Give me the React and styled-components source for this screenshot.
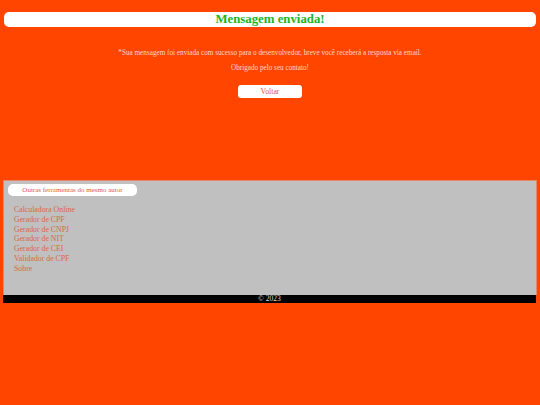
import styled, { createGlobalStyle } from "styled-components";

const GlobalStyle = createGlobalStyle`
  html, body {
    margin: 0;
    padding: 0;
    background: #ff4500;
  }
  body {
    font-family: "Liberation Serif", "Times New Roman", serif;
    min-height: 405px;
  }
`;

const Page = styled.div`
  padding: 12px 3px 0 3px;
  display: flex;
  flex-direction: column;
`;

const TitleBar = styled.h1`
  margin: 0 1px;
  background: #fff;
  border-radius: 5px;
  height: 15px;
  line-height: 15px;
  text-align: center;
  font-size: 12.8px;
  font-weight: bold;
  color: #1cb41c;
`;

const Message = styled.div`
  display: flex;
  flex-direction: column;
  align-items: center;
  padding-top: 22px;
  height: 131px;
  color: #ffd6c8;
  font-size: 7.2px;
`;

const Line = styled.p`
  margin: 0 0 6px 0;
  line-height: 9px;
`;

const BackButton = styled.button`
  margin-top: 5.5px;
  width: 64px;
  height: 13px;
  border: none;
  border-radius: 3px;
  background: #fff;
  color: #e65a36;
  font-family: inherit;
  font-size: 7.8px;
  padding: 0;
`;

const Panel = styled.div`
  background: #c0c0c0;
  border: 1px solid #e8876a;
  border-bottom: none;
  height: 111px;
  padding: 3px 0 0 4px;
  display: flex;
  flex-direction: column;
  align-items: flex-start;
`;

const PanelLabel = styled.div`
  background: #fff;
  border-radius: 5px;
  width: 129px;
  height: 12px;
  line-height: 12px;
  font-size: 7px;
  color: #e4583a;
  text-align: center;
`;

const ToolList = styled.ul`
  list-style: none;
  margin: 9px 0 0 0;
  padding: 0 0 0 6px;
`;

const ToolLink = styled.a`
  display: block;
  color: #d9683f;
  font-size: 7.8px;
  line-height: 9.8px;
  text-decoration: none;
`;

const Footer = styled.footer`
  background: #000;
  height: 8px;
  line-height: 8px;
  text-align: center;
  color: #ddd;
  font-size: 7.6px;
  margin-right: 1px;
`;

const tools = [
  "Calculadora Online",
  "Gerador de CPF",
  "Gerador de CNPJ",
  "Gerador de NIT",
  "Gerador de CEI",
  "Validador de CPF",
  "Sobre",
];

export default function App() {
  return (
    <>
      <GlobalStyle />
      <Page>
        <TitleBar>Mensagem enviada!</TitleBar>
        <Message>
          <Line>
            *Sua mensagem foi enviada com sucesso para o desenvolvedor, breve
            você receberá a resposta via email.
          </Line>
          <Line>Obrigado pelo seu contato!</Line>
          <BackButton>Voltar</BackButton>
        </Message>
        <Panel>
          <PanelLabel>Outras ferramentas do mesmo autor</PanelLabel>
          <ToolList>
            {tools.map((t) => (
              <li key={t}>
                <ToolLink href="#">{t}</ToolLink>
              </li>
            ))}
          </ToolList>
        </Panel>
        <Footer>© 2023</Footer>
      </Page>
    </>
  );
}
